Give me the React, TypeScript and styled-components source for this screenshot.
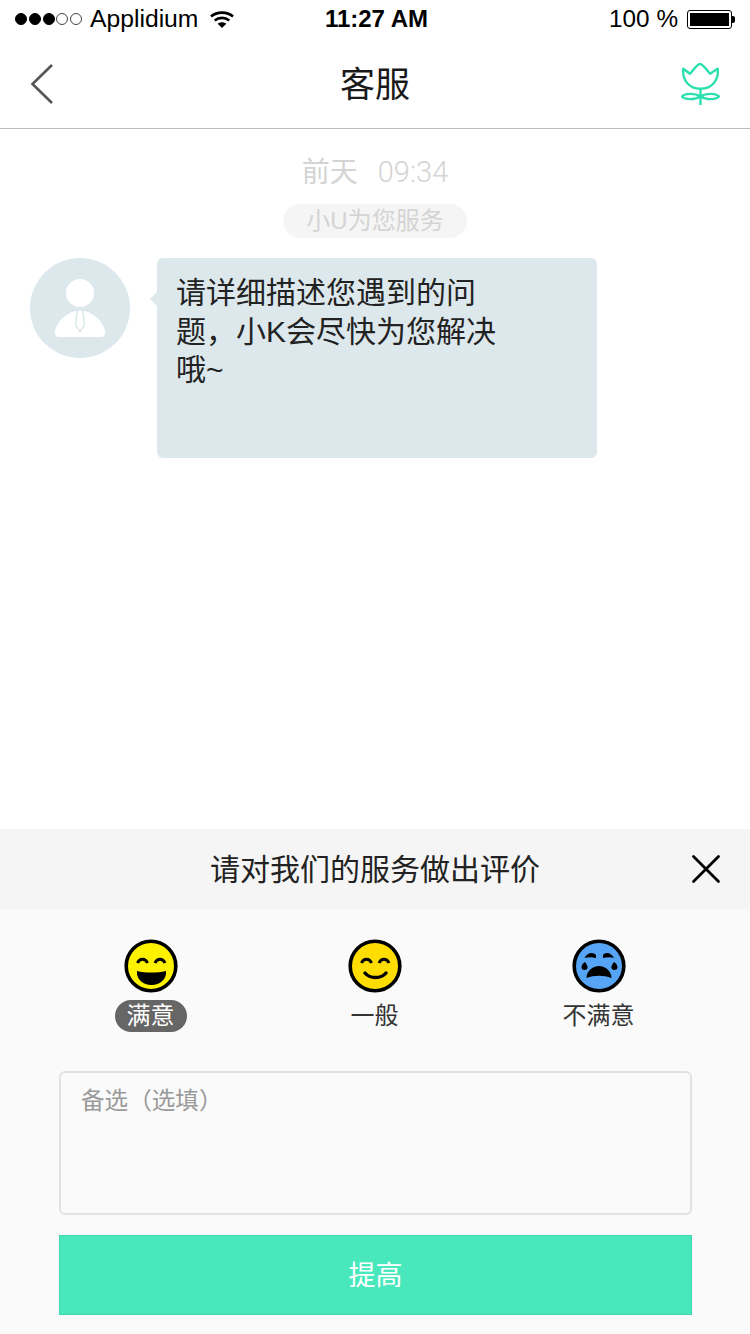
import React from "react";
import styled, { createGlobalStyle } from "styled-components";

const GlobalStyle = createGlobalStyle`
  html, body {
    margin: 0;
    padding: 0;
    background: #fff;
  }
  * {
    box-sizing: border-box;
  }
`;

const CJK = `"Liberation Sans", "Noto Sans CJK SC", sans-serif`;

const options = [
  { label: "满意", face: "happy", active: true },
  { label: "一般", face: "smile", active: false },
  { label: "不满意", face: "cry", active: false },
];

function Face({ kind }: { kind: string }) {
  const fill = kind === "happy" ? "#fff200" : kind === "smile" ? "#ffdd00" : "#55a4f5";
  return (
    <svg width="54" height="54" viewBox="0 0 54 54">
      <circle cx="27" cy="27" r="24.8" fill={fill} stroke="#000" strokeWidth="3.6" />
      {kind === "happy" && (
        <>
          <path d="M13.500 24c2-5 8-5 10 0" fill="none" stroke="#000" strokeWidth="3" />
          <path d="M31 24c2-5 8-5 10 0" fill="none" stroke="#000" strokeWidth="3" />
          <path d="M13 32c8 2 20 2 29 0 1 8-6 14-14.500 14S12 40 13 32z" fill="#000" />
        </>
      )}
      {kind === "smile" && (
        <>
          <path d="M13.500 24c2-5 8-5 10 0" fill="none" stroke="#000" strokeWidth="3" />
          <path d="M31 24c2-5 8-5 10 0" fill="none" stroke="#000" strokeWidth="3" />
          <path d="M17 34c5 6 16 6 21 0" fill="none" stroke="#000" strokeWidth="3.500" strokeLinecap="round" />
        </>
      )}
      {kind === "cry" && (
        <>
          <path d="M12.500 19c3-6 9-6 11.500-3v3c-4-1-8-1-11.500 0z" fill="#000" />
          <path d="M42 19c-3-6-9-6-11-3v3c4-1 8-1 11 0z" fill="#000" />
          <path d="M13 23c2 3 3.500 5 2 7s-6 1-5.500-2 2-4 3.500-5z" fill="#000" />
          <path d="M42 23c-2 3-3.500 5-2 7s6 1 5.500-2-2-4-3.500-5z" fill="#000" />
          <path d="M14.500 39c0-7 6-12 12.500-12s12.500 5 12.500 12c-8-3-17-3-25 0z" fill="#000" />
        </>
      )}
    </svg>
  );
}

function App() {
  return (
    <>
      <GlobalStyle />
      <Page>
        <StatusBar>
          <StatusLeft>
            <Signal>
              <Dot $on />
              <Dot $on />
              <Dot $on />
              <Dot />
              <Dot />
            </Signal>
            <Carrier>Applidium</Carrier>
            <svg width="24" height="17" viewBox="0 0 24 17">
              <path d="M1 5.500C7 .3 17 .3 23 5.500" fill="none" stroke="#000" strokeWidth="2.600" />
              <path d="M4.700 9.500c4.200-3.500 10.400-3.500 14.600 0" fill="none" stroke="#000" strokeWidth="2.600" />
              <path d="M12 17l-4.300-4.300c2.500-2 6.100-2 8.600 0z" fill="#000" />
            </svg>
          </StatusLeft>
          <Clock>11:27 AM</Clock>
          <StatusRight>
            <span>100 %</span>
            <Battery>
              <BatteryFill />
            </Battery>
            <BatteryCap />
          </StatusRight>
        </StatusBar>
        <NavBar>
          <svg width="23" height="40" viewBox="0 0 23 40">
            <path d="M22 1L2.500 20 22 39" fill="none" stroke="#555" strokeWidth="2.600" />
          </svg>
          <NavTitle>客服</NavTitle>
          <svg width="39" height="42" viewBox="0 0 39 42">
            <path
              d="M2.300 5.700L9 10.700C12 8 15 2 19 .9c4 1 7 7 10 9.800l7.700-5C38 17 31 25.700 19.500 25.700S1 17 2.300 5.700z"
              fill="none"
              stroke="#2be0ae"
              strokeWidth="2.400"
              strokeLinejoin="round"
            />
            <path d="M19.500 25.700V42" stroke="#2be0ae" strokeWidth="2.400" />
            <path
              d="M19.500 33.500C14 30 4 30 1 33.500c3 3.500 13 3.500 18.500 0C25 30 35 30 38 33.500c-3 3.500-13 3.500-18.500 0z"
              fill="none"
              stroke="#2be0ae"
              strokeWidth="2.400"
            />
          </svg>
        </NavBar>
        <Chat>
          <Timestamp>
            前天<TimeDigits>09:34</TimeDigits>
          </Timestamp>
          <ServicePill>小U为您服务</ServicePill>
          <MessageRow>
            <Avatar>
              <svg width="52" height="60" viewBox="0 0 52 60">
                <circle cx="26" cy="15" r="14" fill="#fff" />
                <path d="M21 33C10 36 1 46 1 55q0 4 4 4h42q4 0 4-4c0-9-9-19-20-22z" fill="#fff" />
                <path d="M23.500 32h5l1.500 9v7L26 53.500 22 48v-7z" fill="#fff" stroke="#dde8ec" strokeWidth="1.500" />
              </svg>
            </Avatar>
            <Bubble>请详细描述您遇到的问题，小K会尽快为您解决哦~</Bubble>
          </MessageRow>
        </Chat>
        <RatingPanel>
          <RatingHeader>
            <RatingTitle>请对我们的服务做出评价</RatingTitle>
            <CloseIcon width="30" height="30" viewBox="0 0 30 30">
              <path d="M2.500 2.500l25 25M27.500 2.500l-25 25" stroke="#000" strokeWidth="2.800" strokeLinecap="round" />
            </CloseIcon>
          </RatingHeader>
          <RatingBody>
            <Options>
              {options.map((o) => (
                <Option key={o.label}>
                  <Face kind={o.face} />
                  <OptionLabel $active={o.active}>{o.label}</OptionLabel>
                </Option>
              ))}
            </Options>
            <Remark>备选（选填）</Remark>
            <SubmitButton>提高</SubmitButton>
          </RatingBody>
        </RatingPanel>
      </Page>
    </>
  );
}

const Page = styled.div`
  width: 750px;
  height: 1334px;
  display: flex;
  flex-direction: column;
  background: #fff;
  overflow: hidden;
  font-family: ${CJK};
`;

const StatusBar = styled.div`
  height: 38px;
  padding: 0 15px;
  display: grid;
  grid-template-columns: 1fr auto 1fr;
  align-items: center;
  font-size: 24.3px;
  color: #000;
`;

const StatusLeft = styled.div`
  display: flex;
  align-items: center;
  gap: 8px;
`;

const Signal = styled.div`
  display: flex;
  gap: 1.750px;
`;

const Dot = styled.span<{ $on?: boolean }>`
  width: 12px;
  height: 12px;
  border-radius: 50%;
  border: 1px solid ${(p) => (p.$on ? "#000" : "#444")};
  background: ${(p) => (p.$on ? "#000" : "transparent")};
`;

const Carrier = styled.span`
  font-size: 24.700px;
  margin-right: 4px;
`;

const Clock = styled.div`
  font-size: 24px;
  font-weight: 700;
  margin-left: 3px;
`;

const StatusRight = styled.div`
  display: flex;
  align-items: center;
  justify-content: flex-end;

  span {
    margin-right: 9px;
  }
`;

const Battery = styled.div`
  width: 45px;
  height: 19px;
  border: 1px solid #000;
  border-radius: 3px;
  padding: 2px;
`;

const BatteryFill = styled.div`
  width: 100%;
  height: 100%;
  background: #000;
`;

const BatteryCap = styled.div`
  width: 3px;
  height: 7px;
  background: #000;
  border-radius: 0 2px 2px 0;
`;

const NavBar = styled.div`
  height: 91px;
  padding: 2px 30px 0 30px;
  display: flex;
  align-items: center;
  justify-content: space-between;
  border-bottom: 1px solid #bdbdbd;
  position: relative;
`;

const NavTitle = styled.div`
  font-size: 35px;
  line-height: 40px;
  color: #1a1a1a;
  position: absolute;
  left: 0;
  right: 0;
  top: 27px;
  text-align: center;
`;

const Chat = styled.div`
  flex: 1;
  display: flex;
  flex-direction: column;
  align-items: center;
`;

const Timestamp = styled.div`
  margin-top: 25px;
  height: 36px;
  font-size: 28px;
  line-height: 36px;
  color: #d4d4d4;
`;

const TimeDigits = styled.span`
  margin-left: 20px;
  font-family: Roboto, sans-serif;
  font-weight: 300;
  font-size: 29px;
`;

const ServicePill = styled.div`
  margin-top: 14px;
  width: 184px;
  height: 34px;
  border-radius: 17px;
  background: #f5f5f5;
  color: #d4d4d4;
  font-size: 24px;
  line-height: 34px;
  text-align: center;
`;

const MessageRow = styled.div`
  align-self: stretch;
  margin-top: 20px;
  padding-left: 30px;
  display: flex;
  gap: 27px;
`;

const Avatar = styled.div`
  width: 100px;
  height: 100px;
  border-radius: 50%;
  background: #dde8ec;
  display: flex;
  align-items: center;
  justify-content: center;
`;

const Bubble = styled.div`
  position: relative;
  width: 440px;
  height: 200px;
  background: #dde8ec;
  border-radius: 6px;
  padding: 16px 100px 0 19px;
  font-size: 30px;
  line-height: 38.500px;
  color: #222;

  &::before {
    content: "";
    position: absolute;
    left: -5px;
    top: 36px;
    width: 10px;
    height: 10px;
    background: #dde8ec;
    transform: rotate(45deg);
  }
`;

const RatingPanel = styled.div`
  height: 505px;
  display: flex;
  flex-direction: column;
  background: #fafafa;
`;

const RatingHeader = styled.div`
  height: 80px;
  background: #f5f5f5;
  display: flex;
  align-items: center;
  justify-content: center;
  position: relative;
`;

const RatingTitle = styled.div`
  font-size: 30px;
  line-height: 40px;
  margin-top: 1px;
  color: #222;
`;

const CloseIcon = styled.svg`
  position: absolute;
  right: 29px;
  top: 25px;
`;

const RatingBody = styled.div`
  flex: 1;
  padding: 30px 58px 0 59px;
  display: flex;
  flex-direction: column;
`;

const Options = styled.div`
  display: grid;
  grid-template-columns: repeat(3, 224px);
  justify-content: center;
  justify-items: center;
  margin-left: -2px;
`;

const Option = styled.div`
  display: flex;
  flex-direction: column;
  align-items: center;
  gap: 7px;
`;

const OptionLabel = styled.div<{ $active: boolean }>`
  height: 32px;
  line-height: 32px;
  padding: 0 12px;
  border-radius: 16px;
  font-size: 24px;
  background: ${(p) => (p.$active ? "#666" : "transparent")};
  color: ${(p) => (p.$active ? "#fff" : "#333")};
`;

const Remark = styled.div`
  margin-top: 39px;
  height: 144px;
  border: 2px solid #e2e2e2;
  border-radius: 6px;
  padding: 12px 20px;
  font-size: 23.600px;
  line-height: 32px;
  color: #999;
`;

const SubmitButton = styled.div`
  margin-top: 20px;
  height: 80px;
  background: #48e8bc;
  border: 1px solid #3fd8ae;
  color: #fff;
  font-size: 27px;
  line-height: 80px;
  text-align: center;
`;

export default App;
